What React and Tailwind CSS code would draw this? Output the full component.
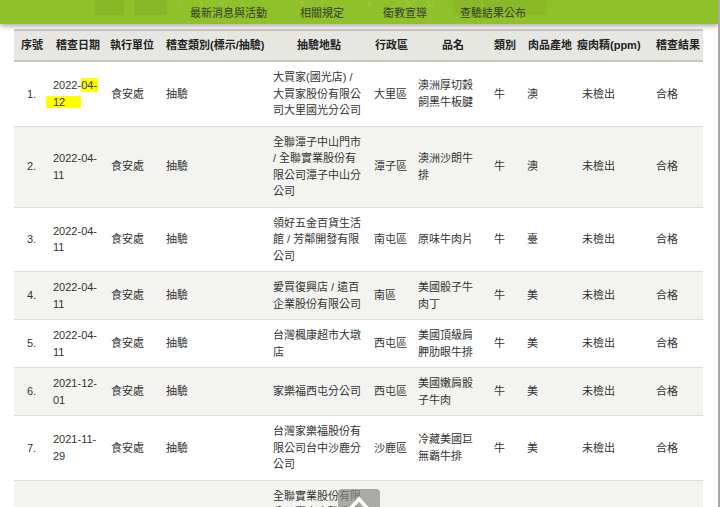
import React from "react";

const COLS = "grid grid-cols-[38px_58px_55px_108px_100px_44px_77px_33px_50px_78px_48px]";

const headers = [
  ["序號", "pl-[7px]"],
  ["稽查日期", "pl-[4px]"],
  ["執行單位", "pl-0"],
  ["稽查類別(標示/抽驗)", "pl-[1px]"],
  ["抽驗地點", "pl-[24px]"],
  ["行政區", "pl-[2px]"],
  ["品名", "pl-[25px]"],
  ["類別", "pl-0"],
  ["肉品產地", "pl-[1px]"],
  ["瘦肉精(ppm)", "pl-0"],
  ["稽查結果", "pl-[1px]"],
];

const rows = [
  { n: "1.", d: ["2022-04-", "12"], hl: true, a: ["大買家(國光店) /", "大買家股份有限公", "司大里國光分公司"], z: "大里區", p: ["澳洲厚切穀", "飼黑牛板腱"], t: "牛", o: "澳" },
  { n: "2.", d: ["2022-04-", "11"], a: ["全聯潭子中山門市", "/ 全聯實業股份有", "限公司潭子中山分", "公司"], z: "潭子區", p: ["澳洲沙朗牛", "排"], t: "牛", o: "澳" },
  { n: "3.", d: ["2022-04-", "11"], a: ["領好五金百貨生活", "館 / 芳鄰開發有限", "公司"], z: "南屯區", p: ["原味牛肉片"], t: "牛", o: "臺" },
  { n: "4.", d: ["2022-04-", "11"], a: ["愛買復興店 / 遠百", "企業股份有限公司"], z: "南區", p: ["美國骰子牛", "肉丁"], t: "牛", o: "美" },
  { n: "5.", d: ["2022-04-", "11"], a: ["台灣楓康超市大墩", "店"], z: "西屯區", p: ["美國頂級肩", "胛肋眼牛排"], t: "牛", o: "美" },
  { n: "6.", d: ["2021-12-", "01"], a: ["家樂福西屯分公司"], z: "西屯區", p: ["美國嫩肩骰", "子牛肉"], t: "牛", o: "美" },
  { n: "7.", d: ["2021-11-", "29"], a: ["台灣家樂福股份有", "限公司台中沙鹿分", "公司"], z: "沙鹿區", p: ["冷藏美國巨", "無霸牛排"], t: "牛", o: "美" },
  { n: "8.", d: ["2021-11-", "29"], a: ["全聯實業股份有限", "公司臺中大雅分公", "司 / 全聯福利中心", "大雅店", "門市"], z: "大雅區", p: ["美國無骨牛", "小排"], t: "牛", o: "美" },
];

function Lines({ items }) {
  return (
    <div>
      {items.map((l, i) => (
        <div key={i} className="whitespace-nowrap">{l}</div>
      ))}
    </div>
  );
}

function Row({ r, i }) {
  const bg = i % 2 === 0 ? "bg-white" : "bg-[#f3f3ef]";
  return (
    <div className={`${COLS} ${bg} items-center border-b border-[#dcdcd8] py-[7px] leading-[16.5px] text-[11px] text-[#333]`}>
      <div className="pl-[13px]">{r.n}</div>
      <div className="pl-[1px]">
        {r.hl ? (
          <div>
            <div className="whitespace-nowrap">
              2022-<span className="bg-[#ffff00] pr-[1px] pt-[1px] pb-[1px]">04-</span>
            </div>
            <div className="whitespace-nowrap">
              <span className="bg-[#ffff00] -ml-[7px] pl-[7px] pr-[16px]">12</span>
            </div>
          </div>
        ) : (
          <Lines items={r.d} />
        )}
      </div>
      <div className="pl-[1px]">食安處</div>
      <div className="pl-[1px]">抽驗</div>
      <div className="pl-0"><Lines items={r.a} /></div>
      <div className="pl-[1px]">{r.z}</div>
      <div className="pl-[1px]"><Lines items={r.p} /></div>
      <div className="pl-0">{r.t}</div>
      <div className="pl-0">{r.o}</div>
      <div className="pl-[5px]">未檢出</div>
      <div className="pl-[1px]">合格</div>
    </div>
  );
}

export default function App() {
  return (
    <div
      className="relative w-[720px] h-[507px] overflow-hidden bg-white border-r-2 border-[#a9a9a9]"
      style={{ fontFamily: '"Liberation Sans", "Noto Sans CJK TC", sans-serif' }}
    >
      <div className="relative z-10 h-[24px] bg-[#8fc12a] shadow-[0_2px_5px_rgba(0,0,0,0.35)]">
        {/* faint pagination showing through the bar */}
        <div className="absolute inset-0 pointer-events-none">
          <div className="absolute left-[95px] top-0 w-[29px] h-[15px] bg-[#86b726] rounded-b-[2px]" />
          <div className="absolute left-[134px] top-0 w-[33px] h-[15px] bg-[#86b726] rounded-b-[2px]" />
          <div className="absolute left-[453px] top-0 w-[28px] h-[15px] bg-[#8ab927] rounded-b-[2px]" />
          <div className="absolute left-[483px] top-0 w-[64px] h-[15px] bg-[#8ab927] rounded-b-[2px]" />
          <div className="absolute left-[178px] top-0 flex text-[7px] leading-[7px] text-[#a2cf4a] gap-[17px]">
            <span>2</span><span>3</span><span>4</span><span>5</span>
            <span className="ml-[38px]">6</span><span>7</span><span className="ml-[26px]">8</span><span className="ml-[18px]">9</span><span>10</span>
          </div>
        </div>
        <nav className="relative flex items-center h-full pt-[3px] pl-[190px] text-[11px] leading-[13px] text-[#3a3a2e]">
          <span>最新消息與活動</span>
          <span className="ml-[33px]">相關規定</span>
          <span className="ml-[39px]">衛教宣導</span>
          <span className="ml-[33px]">查驗結果公布</span>
        </nav>
      </div>

      <div className="ml-[14px] mt-[5px] w-[689px]">
        <div className={`${COLS} items-center h-[33px] bg-[#e7e7e2] border-t-2 border-b-2 border-[#c8c8bf] text-[11px] font-bold text-[#222]`}>
          {headers.map(([h, pl], i) => (
            <div key={i} className={`${pl} whitespace-nowrap`}>{h}</div>
          ))}
        </div>
        {rows.map((r, i) => (
          <Row key={i} r={r} i={i} />
        ))}
      </div>

      <div className="absolute left-[338px] top-[489px] w-[42px] h-[24px] rounded-[4px] bg-[#8c8c88]/70 flex justify-center">
        <svg width="22" height="14" viewBox="0 0 22 14" className="mt-[6px]">
          <path d="M3 13 L11 4 L19 13" fill="none" stroke="white" strokeWidth="3.5" strokeLinecap="square" />
        </svg>
      </div>
    </div>
  );
}
